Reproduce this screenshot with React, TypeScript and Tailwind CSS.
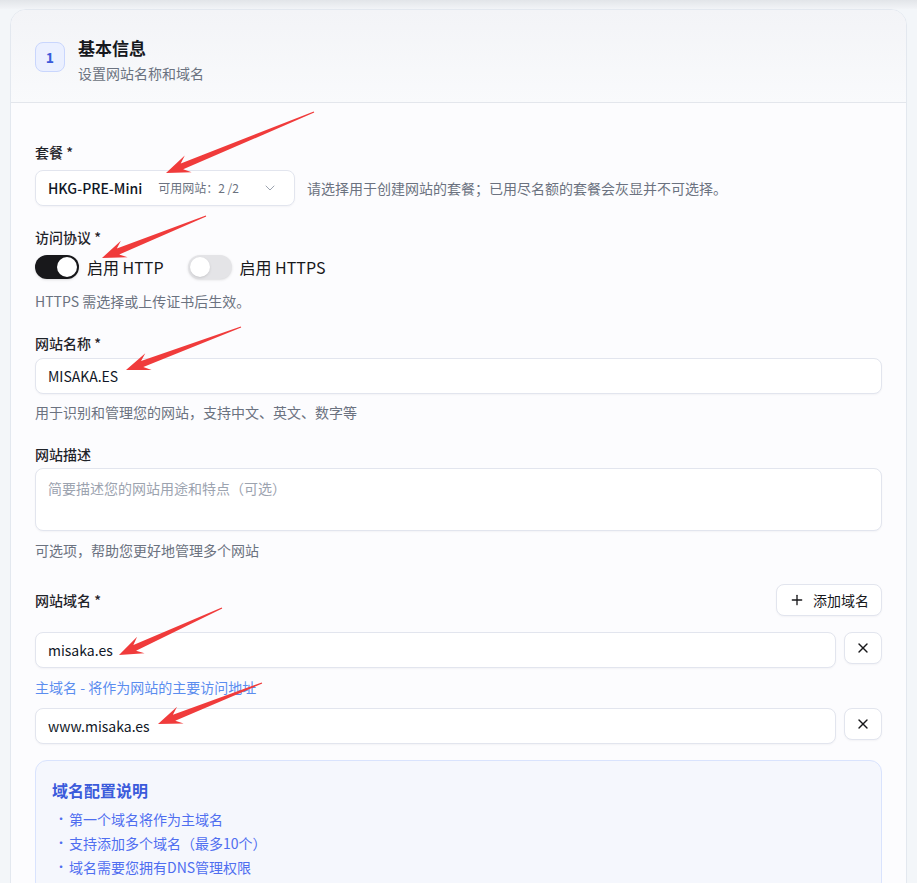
import { ChevronDown, Plus, X } from "lucide-react";

type Pt = [number, number];

// annotation arrows drawn over the screenshot
const arrows: [Pt, Pt][] = [
  [[314, 112], [166, 173]],
  [[206, 216], [102, 258]],
  [[241, 327], [126, 370]],
  [[222, 608], [119, 655]],
  [[262, 683], [158, 724]],
];

function arrowPoints([tx, ty]: Pt, [hx, hy]: Pt) {
  const dx = hx - tx;
  const dy = hy - ty;
  const len = Math.hypot(dx, dy);
  const ux = dx / len;
  const uy = dy / len;
  const nx = -uy;
  const ny = ux;
  const L = 24;
  const W = 9;
  const w = 3.2;
  const neck: Pt = [hx - ux * L * 0.72, hy - uy * L * 0.72];
  const base: Pt = [hx - ux * L, hy - uy * L];
  const pts: Pt[] = [
    [tx + nx * 0.6, ty + ny * 0.6],
    [neck[0] + nx * w, neck[1] + ny * w],
    [base[0] + nx * W, base[1] + ny * W],
    [hx, hy],
    [base[0] - nx * W, base[1] - ny * W],
    [neck[0] - nx * w, neck[1] - ny * w],
    [tx - nx * 0.6, ty - ny * 0.6],
  ];
  return pts.map((p) => p.join(",")).join(" ");
}

function Toggle({ on, label }: { on: boolean; label: string }) {
  return (
    <label className="flex items-center gap-2">
      <span
        className={
          on
            ? "flex h-6 w-11 items-center justify-end rounded-full bg-[#18181b] p-[2px] shadow-sm"
            : "flex h-6 w-11 items-center justify-start rounded-full bg-[#e4e4e7] p-[2px] shadow-sm"
        }
      >
        <span className="h-5 w-5 rounded-full bg-white shadow" />
      </span>
      <span className="text-base text-[#18181b]">{label}</span>
    </label>
  );
}

function Label({ children }: { children: React.ReactNode }) {
  return <div className="text-sm font-medium leading-5 text-[#1f2329]">{children}</div>;
}

function Help({ children, className = "" }: { children: React.ReactNode; className?: string }) {
  return <p className={"text-sm leading-5 text-[#6b7280] " + className}>{children}</p>;
}

function TextInput({ value }: { value: string }) {
  return (
    <div className="flex h-9 flex-1 items-center rounded-lg border border-[#e2e5ee] bg-white px-3 text-sm text-[#111827] shadow-[0_1px_2px_rgba(16,24,40,0.04)]">
      {value}
    </div>
  );
}

function DomainRow({ value }: { value: string }) {
  return (
    <div className="flex items-start gap-2">
      <TextInput value={value} />
      <button className="flex h-8 w-[38px] items-center justify-center rounded-lg border border-[#e2e5ee] bg-white text-[#18181b] shadow-[0_1px_2px_rgba(16,24,40,0.04)]">
        <X size={16} strokeWidth={2} />
      </button>
    </div>
  );
}

const tips = ["第一个域名将作为主域名", "支持添加多个域名（最多10个）", "域名需要您拥有DNS管理权限"];

export default function App() {
  return (
    <div className="relative h-[883px] w-full overflow-hidden bg-[#f3f6f9] font-['Noto_Sans_CJK_SC','Noto_Sans',sans-serif]">
      <div className="h-[9px] bg-gradient-to-b from-[#e2e5e9] to-[#f2f4f7]" />
      <div className="mx-[10px] overflow-hidden rounded-t-2xl border border-[#e3e8ef] bg-[#fcfcfe]">
        {/* header */}
        <div className="flex h-[93px] items-start gap-[13px] border-b border-[#e3e6ec] bg-gradient-to-b from-[#f3f4f7] to-[#f9fafc] px-6 pt-8">
          <div className="flex h-[30px] w-[30px] items-center justify-center rounded-lg border border-[#c9d6fd] bg-[#ebf0ff] text-sm font-bold text-[#3b5bdb]">
            1
          </div>
          <div className="-mt-[8px]">
            <div className="text-[17px] font-bold leading-7 text-[#16181d]">基本信息</div>
            <div className="mt-[1px] text-sm leading-5 text-[#6b7280]">设置网站名称和域名</div>
          </div>
        </div>

        {/* body */}
        <div className="px-6 pt-[39px] pb-10">
          <Label>套餐 *</Label>
          <div className="mt-2 flex items-center gap-3">
            <div className="flex h-9 w-[260px] items-center rounded-lg border border-[#e2e5ee] bg-white pl-3 pr-4 shadow-[0_1px_2px_rgba(16,24,40,0.04)]">
              <span className="text-sm font-medium text-[#111827]">HKG-PRE-Mini</span>
              <span className="ml-4 text-xs text-[#6b7280]">可用网站：2 /2</span>
              <ChevronDown size={16} strokeWidth={1.5} className="ml-auto text-[#9ca3af]" />
            </div>
            <Help>请选择用于创建网站的套餐；已用尽名额的套餐会灰显并不可选择。</Help>
          </div>

          <div className="mt-[21px]">
            <Label>访问协议 *</Label>
          </div>
          <div className="mt-2 flex items-center gap-6">
            <Toggle on label="启用 HTTP" />
            <Toggle on={false} label="启用 HTTPS" />
          </div>
          <Help className="mt-3">HTTPS 需选择或上传证书后生效。</Help>

          <div className="mt-[22px]">
            <Label>网站名称 *</Label>
          </div>
          <div className="mt-[5px] flex">
            <TextInput value="MISAKA.ES" />
          </div>
          <Help className="mt-2">用于识别和管理您的网站，支持中文、英文、数字等</Help>

          <div className="mt-[22px]">
            <Label>网站描述</Label>
          </div>
          <div className="mt-1 h-[63px] rounded-lg border border-[#e2e5ee] bg-white px-3 pt-[9px] text-sm text-[#9ca3af] shadow-[0_1px_2px_rgba(16,24,40,0.04)]">
            简要描述您的网站用途和特点（可选）
          </div>
          <Help className="mt-[9px]">可选项，帮助您更好地管理多个网站</Help>

          <div className="mt-6 flex items-center justify-between">
            <Label>网站域名 *</Label>
            <button className="flex h-8 items-center gap-2 rounded-lg border border-[#e2e5ee] bg-white px-3 text-sm text-[#18181b] shadow-[0_1px_2px_rgba(16,24,40,0.04)]">
              <Plus size={16} strokeWidth={2} />
              添加域名
            </button>
          </div>
          <div className="mt-4">
            <DomainRow value="misaka.es" />
          </div>
          <p className="mt-[9px] text-sm leading-5 text-[#5b8def]">主域名 - 将作为网站的主要访问地址</p>
          <div className="mt-[11px]">
            <DomainRow value="www.misaka.es" />
          </div>

          <div className="mt-4 rounded-xl border border-[#d9e3fd] bg-[#f5f7fd] px-4 pt-[17px] pb-4">
            <div className="text-base font-semibold leading-6 text-[#3b5bdb]">域名配置说明</div>
            <ul className="mt-[7px] space-y-1 text-sm leading-5 text-[#4f6ef0]">
              {tips.map((t) => (
                <li key={t} className="flex">
                  <span className="w-[17px] shrink-0 pl-[3px] text-xs leading-5">•</span>
                  {t}
                </li>
              ))}
            </ul>
          </div>
        </div>
      </div>

      <svg
        className="pointer-events-none absolute left-0 top-0"
        width={917}
        height={883}
        viewBox="0 0 917 883"
      >
        {arrows.map(([t, h], i) => (
          <polygon key={i} points={arrowPoints(t, h)} fill="#f03b3b" />
        ))}
      </svg>
    </div>
  );
}
